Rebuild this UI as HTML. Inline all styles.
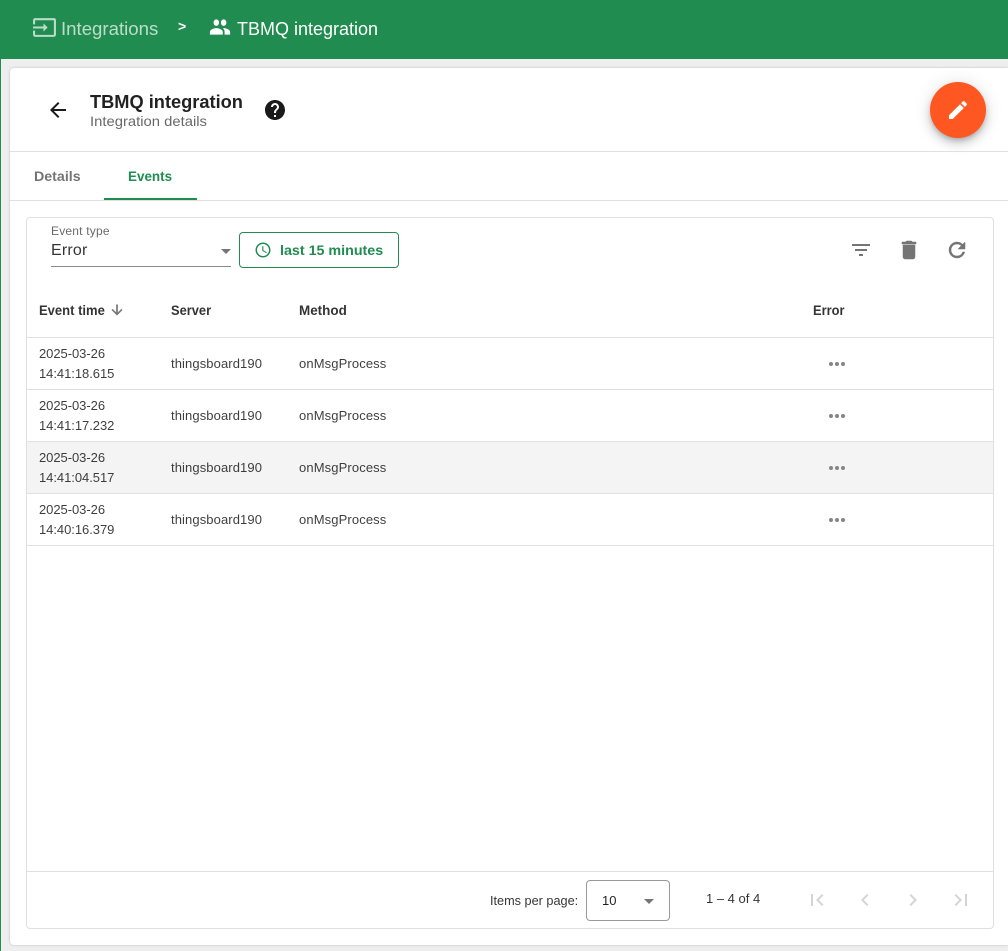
<!DOCTYPE html>
<html><head><meta charset="utf-8"><style>
html,body{margin:0;padding:0;width:1008px;height:951px;overflow:hidden;background:#eee;font-family:"Liberation Sans",sans-serif}
.a{position:absolute;white-space:nowrap;line-height:20px}
.l{position:absolute;background:#e0e0e0}
svg{position:absolute;display:block}
.c{font-size:13px;color:rgba(0,0,0,.76);letter-spacing:-.05px}
.t{letter-spacing:.1px}
.m{letter-spacing:.12px}
.h{font-size:14px;font-weight:bold;color:rgba(0,0,0,.8);transform-origin:0 50%;transform:scaleX(.92)}
.g{stroke:#757575;stroke-width:.5}
</style></head><body>
<div style="position:absolute;left:0;top:0;width:1008px;height:59px;background:#208c50"></div>
<div style="position:absolute;left:0;top:59px;width:1px;height:892px;background:#208c50"></div>

<svg style="left:32px;top:15px;opacity:.7" width="25" height="25" viewBox="0 0 24 24"><path fill="#fff" d="M21 3.01H3c-1.1 0-2 .9-2 2V9h2V4.99h18v14.03H3V15H1v4.01c0 1.1.9 1.98 2 1.98h18c1.1 0 2-.88 2-1.98v-14a2 2 0 0 0-2-1.99zM11 16l4-4-4-4v3H1v2h10v3z"/></svg>
<div class="a" style="left:61px;top:19px;font-size:18px;color:rgba(255,255,255,.7);transform-origin:0 50%;transform:scaleX(1.034)">Integrations</div>
<div class="a" style="left:178px;top:16px;font-size:14px;font-weight:bold;color:#fff">&gt;</div>
<svg style="left:209px;top:14px" width="22" height="26" viewBox="0 0 24 24" preserveAspectRatio="none"><path fill="#fff" d="M16 11c1.66 0 2.99-1.34 2.99-3S17.66 5 16 5c-1.66 0-3 1.34-3 3s1.34 3 3 3zm-8 0c1.66 0 2.99-1.34 2.99-3S9.66 5 8 5C6.34 5 5 6.34 5 8s1.34 3 3 3zm0 2c-2.33 0-7 1.17-7 3.5V19h14v-2.5c0-2.33-4.67-3.5-7-3.5zm8 0c-.29 0-.62.02-.97.05 1.16.84 1.97 1.97 1.97 3.45V19h6v-2.5c0-2.33-4.67-3.5-7-3.5z"/></svg>
<div class="a" style="left:237px;top:19px;font-size:18px;color:#fff;transform-origin:0 50%;transform:scaleX(1)">TBMQ integration</div>

<div style="position:absolute;left:10px;top:68px;width:998px;height:877px;background:#fff;border-radius:4px 0 0 4px;box-shadow:0 0 2px rgba(0,0,0,.22)"></div>

<svg style="left:46px;top:98px" width="24" height="24" viewBox="0 0 24 24"><path fill="#1a1a1a" d="M20 11H7.83l5.59-5.59L12 4l-8 8 8 8 1.41-1.41L7.83 13H20v-2z"/></svg>
<div class="a" style="left:90px;top:92px;font-size:18px;font-weight:bold;color:rgba(0,0,0,.87);transform-origin:0 50%;transform:scaleX(1.013)">TBMQ integration</div>
<div class="a" style="left:90px;top:111px;font-size:14px;color:rgba(0,0,0,.6);transform-origin:0 50%;transform:scaleX(1.058)">Integration details</div>
<svg style="left:263px;top:98px" width="24" height="24" viewBox="0 0 24 24"><path fill="#1a1a1a" d="M12 2C6.48 2 2 6.48 2 12s4.48 10 10 10 10-4.48 10-10S17.52 2 12 2zm1 17h-2v-2h2v2zm2.07-7.75-.9.92C13.45 12.9 13 13.5 13 15h-2v-.5c0-1.1.45-2.1 1.17-2.83l1.24-1.26c.37-.36.59-.86.59-1.41 0-1.1-.9-2-2-2s-2 .9-2 2H8c0-2.21 1.79-4 4-4s4 1.79 4 4c0 .88-.36 1.68-.93 2.25z"/></svg>

<div style="position:absolute;left:930px;top:82px;width:56px;height:56px;border-radius:50%;background:#ff5722;box-shadow:0 3px 5px -1px rgba(0,0,0,.2),0 6px 10px rgba(0,0,0,.14),0 1px 18px rgba(0,0,0,.12)"></div>
<svg style="left:946px;top:98px" width="24" height="24" viewBox="0 0 24 24"><path fill="#fff" d="M3 17.25V21h3.75L17.81 9.94l-3.75-3.75L3 17.25zM20.71 7.04a1 1 0 0 0 0-1.41l-2.34-2.34a1 1 0 0 0-1.41 0l-1.83 1.83 3.75 3.75 1.83-1.83z"/></svg>

<div class="l" style="left:10px;top:151px;width:998px;height:1px"></div>
<div class="a" style="left:34px;top:166px;font-size:14px;font-weight:bold;color:rgba(0,0,0,.55);transform-origin:0 50%;transform:scaleX(1.016)">Details</div>
<div class="a" style="left:128px;top:166px;font-size:14px;font-weight:bold;color:#208c50;transform-origin:0 50%;transform:scaleX(.96)">Events</div>
<div style="position:absolute;left:104px;top:198px;width:93px;height:2px;background:#208c50"></div>
<div class="l" style="left:10px;top:200px;width:998px;height:1px"></div>

<div style="position:absolute;left:26px;top:217px;width:966px;height:710px;border:1px solid #e0e0e0;border-radius:4px"></div>

<div class="a" style="left:51px;top:221px;font-size:12px;letter-spacing:.2px;color:rgba(0,0,0,.6)">Event type</div>
<div class="a" style="left:51px;top:241px;font-size:16px;letter-spacing:.2px;color:rgba(0,0,0,.8)">Error</div>
<div style="position:absolute;left:221px;top:249px;width:0;height:0;border-left:5px solid transparent;border-right:5px solid transparent;border-top:5px solid rgba(0,0,0,.54)"></div>
<div style="position:absolute;left:51px;top:266px;width:180px;height:1px;background:#8a8a8a"></div>

<div style="position:absolute;left:239px;top:232px;width:158px;height:34px;border:1px solid #208c50;border-radius:4px"></div>
<svg style="left:254px;top:241px" width="18" height="18" viewBox="0 0 24 24"><path fill="#208c50" d="M11.99 2C6.47 2 2 6.48 2 12s4.47 10 9.99 10C17.52 22 22 17.52 22 12S17.52 2 11.99 2zM12 20c-4.42 0-8-3.58-8-8s3.58-8 8-8 8 3.58 8 8-3.58 8-8 8zm.5-13H11v6l5.25 3.15.75-1.23-4.5-2.67V7z"/></svg>
<div class="a" style="left:280px;top:240px;font-size:14px;font-weight:bold;color:#208c50;transform-origin:0 50%;transform:scaleX(1.02)">last 15 minutes</div>

<svg style="left:849px;top:238px" width="24" height="24" viewBox="0 0 24 24"><path fill="#757575" d="M10 18h4v-2h-4v2zM3 6v2h18V6H3zm3 7h12v-2H6v2z"/></svg>
<svg style="left:897px;top:238px" width="24" height="24" viewBox="0 0 24 24"><path class="g" fill="#757575" d="M6 19c0 1.1.9 2 2 2h8c1.1 0 2-.9 2-2V7H6v12zM19 4h-3.5l-1-1h-5l-1 1H5v2h14V4z"/></svg>
<svg style="left:945px;top:238px" width="24" height="24" viewBox="0 0 24 24"><path class="g" fill="#757575" d="M17.65 6.35A7.958 7.958 0 0 0 12 4c-4.42 0-7.99 3.58-7.99 8s3.57 8 7.99 8c3.73 0 6.84-2.55 7.73-6h-2.08A5.99 5.99 0 0 1 12 18c-3.31 0-6-2.69-6-6s2.69-6 6-6c1.66 0 3.14.69 4.22 1.78L13 11h7V4l-2.35 2.35z"/></svg>

<div class="a h" style="left:39px;top:300px;transform:scaleX(.93)">Event time</div>
<svg style="left:109px;top:302px" width="16" height="16" viewBox="0 0 24 24"><path class="g" fill="#757575" d="M20 12l-1.41-1.41L13 16.17V4h-2v12.17l-5.58-5.59L4 12l8 8 8-8z"/></svg>
<div class="a h" style="left:171px;top:300px">Server</div>
<div class="a h" style="left:299px;top:300px;transform:scaleX(.96)">Method</div>
<div class="a h" style="left:813px;top:300px">Error</div>

<div class="l" style="left:27px;top:337px;width:966px;height:1px"></div>
<div class="l" style="left:27px;top:389px;width:966px;height:1px"></div>
<div style="position:absolute;left:27px;top:442px;width:966px;height:51px;background:#f4f4f4"></div>
<div class="l" style="left:27px;top:441px;width:966px;height:1px"></div>
<div class="l" style="left:27px;top:493px;width:966px;height:1px"></div>
<div class="l" style="left:27px;top:545px;width:966px;height:1px"></div>

<div class="a c" style="left:39px;top:344px">2025-03-26</div><div class="a c" style="left:39px;top:364px">14:41:18.615</div>
<div class="a c t" style="left:171px;top:354px">thingsboard190</div><div class="a c m" style="left:299px;top:354px">onMsgProcess</div>
<div class="a c" style="left:39px;top:396px">2025-03-26</div><div class="a c" style="left:39px;top:416px">14:41:17.232</div>
<div class="a c t" style="left:171px;top:406px">thingsboard190</div><div class="a c m" style="left:299px;top:406px">onMsgProcess</div>
<div class="a c" style="left:39px;top:448px">2025-03-26</div><div class="a c" style="left:39px;top:468px">14:41:04.517</div>
<div class="a c t" style="left:171px;top:458px">thingsboard190</div><div class="a c m" style="left:299px;top:458px">onMsgProcess</div>
<div class="a c" style="left:39px;top:500px">2025-03-26</div><div class="a c" style="left:39px;top:520px">14:40:16.379</div>
<div class="a c t" style="left:171px;top:510px">thingsboard190</div><div class="a c m" style="left:299px;top:510px">onMsgProcess</div>

<svg style="left:825px;top:352px" width="24" height="24" viewBox="0 0 24 24"><path fill="#858585" d="M6 10a2 2 0 1 0 0 4 2 2 0 0 0 0-4zm12 0a2 2 0 1 0 0 4 2 2 0 0 0 0-4zm-6 0a2 2 0 1 0 0 4 2 2 0 0 0 0-4z"/></svg>
<svg style="left:825px;top:404px" width="24" height="24" viewBox="0 0 24 24"><path fill="#858585" d="M6 10a2 2 0 1 0 0 4 2 2 0 0 0 0-4zm12 0a2 2 0 1 0 0 4 2 2 0 0 0 0-4zm-6 0a2 2 0 1 0 0 4 2 2 0 0 0 0-4z"/></svg>
<svg style="left:825px;top:456px" width="24" height="24" viewBox="0 0 24 24"><path fill="#858585" d="M6 10a2 2 0 1 0 0 4 2 2 0 0 0 0-4zm12 0a2 2 0 1 0 0 4 2 2 0 0 0 0-4zm-6 0a2 2 0 1 0 0 4 2 2 0 0 0 0-4z"/></svg>
<svg style="left:825px;top:508px" width="24" height="24" viewBox="0 0 24 24"><path fill="#858585" d="M6 10a2 2 0 1 0 0 4 2 2 0 0 0 0-4zm12 0a2 2 0 1 0 0 4 2 2 0 0 0 0-4zm-6 0a2 2 0 1 0 0 4 2 2 0 0 0 0-4z"/></svg>

<div class="l" style="left:27px;top:871px;width:966px;height:1px"></div>
<div class="a" style="left:490px;top:891px;font-size:12.7px;color:rgba(0,0,0,.8)">Items per page:</div>
<div style="position:absolute;left:586px;top:880px;width:82px;height:39px;border:1px solid #9a9a9a;border-radius:4px"></div>
<div class="a" style="left:602px;top:891px;font-size:13px;color:rgba(0,0,0,.87)">10</div>
<div style="position:absolute;left:644px;top:899px;width:0;height:0;border-left:5px solid transparent;border-right:5px solid transparent;border-top:5px solid rgba(0,0,0,.54)"></div>
<div class="a" style="left:706px;top:889px;font-size:13px;color:rgba(0,0,0,.8)">1 – 4 of 4</div>
<svg style="left:805px;top:888px" width="24" height="24" viewBox="0 0 24 24"><path fill="rgba(0,0,0,.17)" d="M18.41 16.59 13.82 12l4.59-4.59L17 6l-6 6 6 6zM6 6h2v12H6z"/></svg>
<svg style="left:853px;top:888px" width="24" height="24" viewBox="0 0 24 24"><path fill="rgba(0,0,0,.17)" d="M15.41 7.41 14 6l-6 6 6 6 1.41-1.41L10.83 12z"/></svg>
<svg style="left:901px;top:888px" width="24" height="24" viewBox="0 0 24 24"><path fill="rgba(0,0,0,.17)" d="M10 6 8.59 7.41 13.17 12l-4.58 4.59L10 18l6-6z"/></svg>
<svg style="left:949px;top:888px" width="24" height="24" viewBox="0 0 24 24"><path fill="rgba(0,0,0,.17)" d="M5.59 7.41 10.18 12l-4.59 4.59L7 18l6-6-6-6zM16 6h2v12h-2z"/></svg>
</body></html>
